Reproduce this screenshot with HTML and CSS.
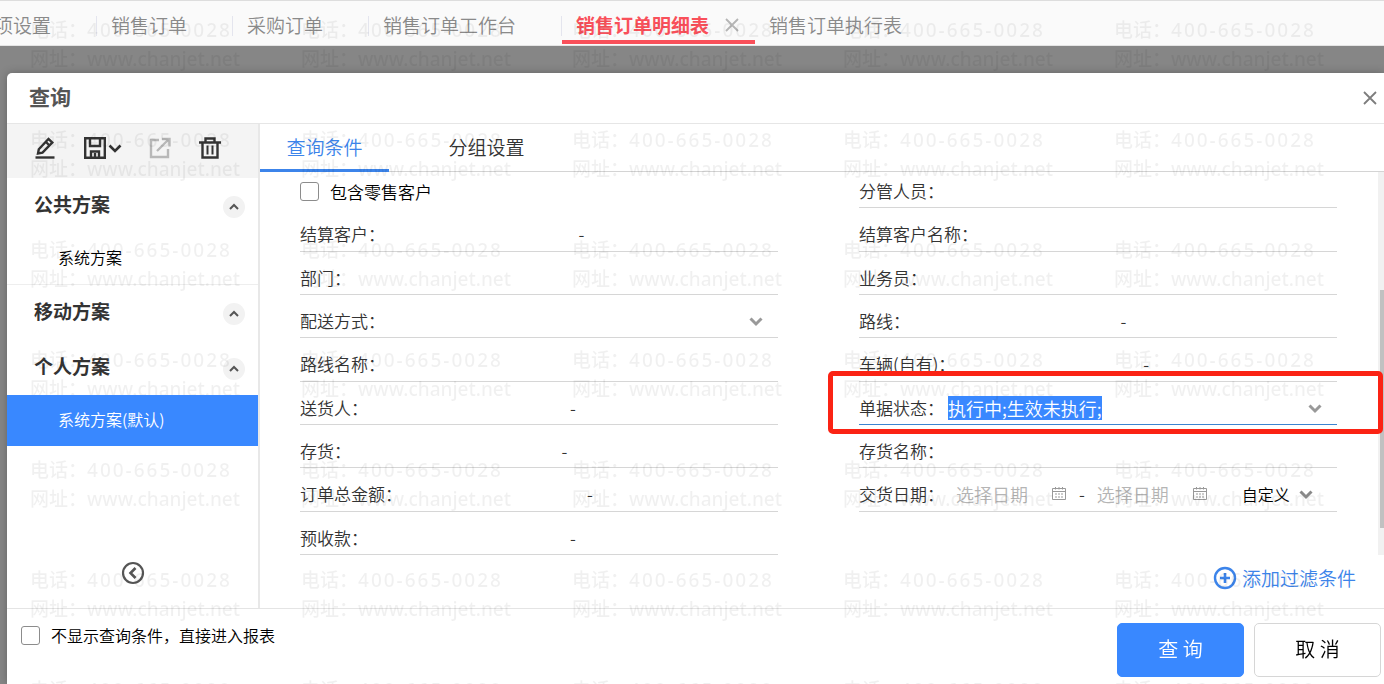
FILE: index.html
```html
<!DOCTYPE html>
<html lang="zh-CN">
<head>
<meta charset="utf-8">
<title>销售订单明细表</title>
<link rel="stylesheet" href="styles.css">
</head>
<body>
<svg class="sprite" aria-hidden="true">
  <symbol id="down" viewBox="0 0 14 14"><path d="M1.500 4.500L7 10l5.500-5.500" fill="none" stroke="currentColor" stroke-width="3"/></symbol>
  <symbol id="up" viewBox="0 0 14 14"><path d="M3 9l4-4 4 4" fill="none" stroke="currentColor" stroke-width="2"/></symbol>
  <symbol id="cross" viewBox="0 0 14 14"><path d="M1 1l12 12M13 1L1 13" fill="none" stroke="currentColor" stroke-width="1.8"/></symbol>
  <symbol id="calendar" viewBox="0 0 16 16"><path d="M1.500 2.500h13v11h-13zM1.500 5.500h13M4.500 1v2.500M8 1v2.500M11.500 1v2.500" fill="none" stroke="currentColor"/><path d="M4 8h2m1 0h2m1 0h2M4 11h2m1 0h2m1 0h2" stroke="currentColor"/></symbol>
</svg>

<nav class="pages">
  <a class="page" href="#">项设置</a>
  <a class="page" href="#">销售订单</a>
  <a class="page" href="#">采购订单</a>
  <a class="page" href="#">销售订单工作台</a>
  <span class="page page-active"><a href="#">销售订单明细表</a><button class="page-close" aria-label="关闭标签"><svg class="i14"><use href="#cross"/></svg></button></span>
  <a class="page" href="#">销售订单执行表</a>
</nav>

<div class="backdrop">
  <section class="dialog" role="dialog" aria-labelledby="dialog-title">
    <header class="dialog-head">
      <h1 id="dialog-title">查询</h1>
      <button class="dialog-close" aria-label="关闭"><svg class="i14"><use href="#cross"/></svg></button>
    </header>

    <div class="dialog-body">
      <aside class="side">
        <div class="tools">
          <button aria-label="编辑"><svg class="i22" viewBox="0 0 22 22" fill="none" stroke="currentColor"><path d="M1.500 20.500h19" stroke-width="2.400"/><path d="M4 16.500l.8-4.300L14.500 2l3.800 3.600-9.800 10zM12 5l3.500 3.500" stroke-width="2.400"/></svg></button>
          <button class="save" aria-label="保存"><svg class="i22" viewBox="0 0 22 22" fill="none" stroke="currentColor" stroke-width="2.4"><path d="M1.200 1.200h19.600v19.600H1.200zM6 1.500v7.500h10V1.500M7 20.500v-6h8v6M11 16v4"/></svg><svg class="i14" viewBox="0 0 14 14"><path d="M1.500 4.500L7 10l5.500-5.500" fill="none" stroke="currentColor" stroke-width="2.600"/></svg></button>
          <button class="muted" aria-label="分享"><svg class="i22" viewBox="0 0 22 22" fill="none" stroke="currentColor" stroke-width="2.400"><path d="M10 3H2v17h17v-8M8 14L20 2M13 2h7.500v7.500"/></svg></button>
          <button aria-label="删除"><svg class="i22" viewBox="0 0 22 22" fill="none" stroke="currentColor" stroke-width="2.400"><path d="M0 5.500h22M6.500 5V1.500h9V5M3.500 6v14.500h15V6"/><path d="M8.500 8.500v9M13.500 8.500v9" stroke-width="2"/></svg></button>
        </div>
        <div class="group"><h2>公共方案</h2><button class="fold" aria-label="收起公共方案"><svg class="i14"><use href="#up"/></svg></button></div>
        <a class="plan plan-last" href="#">系统方案</a>
        <div class="group"><h2>移动方案</h2><button class="fold" aria-label="收起移动方案"><svg class="i14"><use href="#up"/></svg></button></div>
        <div class="group"><h2>个人方案</h2><button class="fold" aria-label="收起个人方案"><svg class="i14"><use href="#up"/></svg></button></div>
        <a class="plan plan-active" href="#">系统方案(默认)</a>
        <button class="collapse" aria-label="收起侧栏"><svg class="i24" viewBox="0 0 24 24" fill="none" stroke="currentColor"><circle cx="12" cy="12" r="10" stroke-width="2.200"/><path d="M14.500 7l-5 5 5 5" stroke-width="2.600"/></svg></button>
      </aside>

      <main class="main">
        <div class="tabs" role="tablist">
          <button class="tab tab-active" role="tab" aria-selected="true">查询条件</button>
          <button class="tab" role="tab" aria-selected="false">分组设置</button>
        </div>
        <div class="scroll">
          <form class="fields">
            <label class="cell check"><input class="box" type="checkbox">包含零售客户</label>
            <div class="cell"><label for="f1">分管人员：</label><input id="f1"></div>
            <div class="cell"><label for="f2">结算客户：</label><input id="f2"><span>-</span><input aria-label="结算客户至"></div>
            <div class="cell"><label for="f3">结算客户名称：</label><input id="f3"></div>
            <div class="cell"><label for="f4">部门：</label><input id="f4"></div>
            <div class="cell"><label for="f5">业务员：</label><input id="f5"></div>
            <div class="cell"><label for="f6">配送方式：</label><input id="f6"><button class="drop" type="button" aria-label="选择配送方式"><svg class="i14"><use href="#down"/></svg></button></div>
            <div class="cell"><label for="f7">路线：</label><input id="f7"><span>-</span><input aria-label="路线至"></div>
            <div class="cell"><label for="f8">路线名称：</label><input id="f8"></div>
            <div class="cell"><label for="f9">车辆(自有)：</label><input id="f9"><span>-</span><input aria-label="车辆至"></div>
            <div class="cell"><label for="f10">送货人：</label><input id="f10"><span>-</span><input aria-label="送货人至"></div>
            <div class="cell cell-focus"><label for="status">单据状态：</label><input id="status" class="status" value="执行中;生效未执行;"><button class="drop" type="button" aria-label="选择单据状态"><svg class="i14"><use href="#down"/></svg></button><div class="callout"></div></div>
            <div class="cell"><label for="f12">存货：</label><input id="f12"><span>-</span><input aria-label="存货至"></div>
            <div class="cell"><label for="f13">存货名称：</label><input id="f13"></div>
            <div class="cell"><label for="f14">订单总金额：</label><input id="f14"><span>-</span><input aria-label="订单总金额至"></div>
            <div class="cell dates"><label for="f15">交货日期：</label><span class="date"><input id="f15" placeholder="选择日期"><svg class="i16"><use href="#calendar"/></svg></span><span>-</span><span class="date"><input aria-label="交货日期至" placeholder="选择日期"><svg class="i16"><use href="#calendar"/></svg></span><select class="range" aria-label="日期范围"><option>自定义</option></select><svg class="i14 range-arrow"><use href="#down"/></svg></div>
            <div class="cell"><label for="f16">预收款：</label><input id="f16"><span>-</span><input aria-label="预收款至"></div>
          </form>
          <div class="track"><div class="thumb"></div></div>
        </div>
        <div class="more"><button class="add"><svg class="i24" viewBox="0 0 24 24" fill="none" stroke="currentColor"><circle cx="12" cy="12" r="10" stroke-width="2.400"/><path d="M12 7v10M7 12h10" stroke-width="2.600"/></svg>添加过滤条件</button></div>
      </main>
    </div>

    <footer class="dialog-foot">
      <label class="skip"><input class="box" type="checkbox">不显示查询条件，直接进入报表</label>
      <div class="actions">
        <button class="btn btn-main">查 询</button>
        <button class="btn">取 消</button>
      </div>
    </footer>
  </section>
</div>

<div class="watermark" aria-hidden="true"></div>
<script src="app.js"></script>
</body>
</html>
```

FILE: styles.css
```css
* { box-sizing: border-box; }

body {
  margin: 0;
  height: 100vh;
  overflow: hidden;
  display: flex;
  flex-direction: column;
  font-family: "Noto Sans CJK SC", sans-serif;
  font-weight: 350;
  font-size: 17px;
  line-height: 24px;
  color: #333;
}

button, input, select { font: inherit; color: inherit; }
button { border: 0; padding: 0; background: none; display: flex; align-items: center; justify-content: center; }
a { color: inherit; text-decoration: none; }
h1, h2 { margin: 0; }
svg { display: block; flex: none; }

.sprite { position: absolute; width: 0; height: 0; }
.i14 { width: 14px; height: 14px; }
.i16 { width: 16px; height: 16px; }
.i22 { width: 22px; height: 22px; }
.i24 { width: 24px; height: 24px; }

.pages {
  flex: none;
  display: flex;
  height: 46px;
  padding: 12px 0 0;
  margin-left: -20px;
  background: #fafafa;
  border-top: 1px solid #ddd;
  border-bottom: 1px solid #e4e4e4;
  font-size: 19px;
  color: #8a8a8a;
}
.page {
  flex: none;
  padding: 0 46px 0 14px;
  white-space: nowrap;
  background: linear-gradient(#e4e5ee, #e4e5ee) right 0 top 3px / 1px 20px no-repeat;
}
.page:last-child { background: none; }
.page-active {
  display: flex;
  align-items: center;
  align-self: stretch;
  gap: 16px;
  padding: 0 16px 3px 14px;
  margin-bottom: 1px;
  border-bottom: 4px solid #f9505a;
  background: none;
  color: #f9505a;
  font-weight: 700;
}
.page-close { color: #b5b5b5; }

.backdrop {
  flex: 1;
  min-height: 0;
  padding: 27px 0 0 7px;
  background: #868686;
}
.dialog {
  height: 100%;
  display: flex;
  flex-direction: column;
  background: #fff;
  border-radius: 5px 0 0 0;
  box-shadow: 0 0 8px rgba(0, 0, 0, .25);
}
.dialog-head {
  display: flex;
  justify-content: space-between;
  align-items: center;
  height: 51px;
  padding: 0 7px 0 22px;
  border-bottom: 1px solid #e6e6e6;
}
.dialog-head h1 { padding-bottom: 4px; font-size: 21px; color: #555; }
.dialog-close { color: #7d7d7d; }

.dialog-body { flex: 1; min-height: 0; display: flex; }

.side {
  flex: none;
  width: 253px;
  display: flex;
  flex-direction: column;
  border-right: 2px solid #e8e8e8;
}
.tools {
  display: flex;
  align-items: center;
  justify-content: space-between;
  height: 54px;
  padding: 0 37px 6px 27px;
  background: #f4f4f4;
}
.tools .muted { color: #b8b8b8; }
.save { gap: 2px; }
.group {
  display: flex;
  align-items: center;
  justify-content: space-between;
  height: 55px;
  padding: 0 13px 0 27px;
}
.group h2 { padding-bottom: 3px; font-size: 19px; }
.fold { width: 22px; height: 22px; margin-top: 2px; border-radius: 50%; background: #f2f2f2; color: #555; }
.plan {
  display: flex;
  align-items: center;
  height: 51px;
  padding: 0 0 3px 51px;
  font-size: 16px;
  color: #000;
}
.plan-last { height: 52px; border-bottom: 1px solid #eee; }
.plan-active { position: relative; z-index: 6; background: #3988ff; color: #fff; }
.collapse { margin: auto auto 23px; color: #555; }

.main { flex: 1; min-width: 0; display: flex; flex-direction: column; overflow: hidden; }
.tabs { display: flex; gap: 33px; height: 48px; border-bottom: 1px solid #d4d4d4; }
.tab { width: 129px; height: 48px; padding: 1px 0 0; border-bottom: 3px solid transparent; font-size: 19px; }
.tab-active { border-color: #3c84ea; color: #3c84ea; }

.scroll { flex: 1; min-height: 0; display: flex; justify-content: space-between; }
.fields {
  flex: 1;
  display: grid;
  grid-template-columns: 1fr 1fr;
  grid-auto-rows: 1fr;
  column-gap: 81px;
  margin-top: -7px;
  padding: 0 41px 0 40px;
}
.cell {
  position: relative;
  display: flex;
  align-items: center;
  min-width: 0;
  padding-top: 10px;
  border-bottom: 1px solid #d6d6d6;
}
.cell label { flex: none; }
.cell input:not(.box) {
  flex: 1;
  min-width: 0;
  width: 0;
  padding: 0;
  border: 0;
  outline: 0;
  background: none;
}
.check { border: 0; gap: 11px; color: #000; }
.box {
  appearance: none;
  flex: none;
  width: 19px;
  height: 19px;
  margin: 0;
  border: 1px solid #8c8c8c;
  border-radius: 3px;
  background: #fff;
}
.drop { margin-right: 15px; color: #999; }
.cell-focus { border-color: #3c84d0; }
.cell .status { font-size: 18px; margin-left: 4px; }
.status::selection { background: #3988ff; color: #fff; }
.callout {
  position: absolute;
  z-index: 7;
  inset: -11px -46px -10px -31px;
  border: 5px solid #fb2314;
  border-radius: 5px;
  pointer-events: none;
}
.dates { gap: 12px; }
.date { display: flex; align-items: center; width: 111px; font-size: 18px; }
.date svg { color: #999; }
.date input::placeholder { color: #b5b5b5; }
.range {
  appearance: none;
  margin-left: 22px;
  width: 48px;
  padding: 0;
  border: 0;
  background: none;
  font-size: 16px;
  color: #000;
}
.range-arrow { margin-left: -3px; color: #888; }

.track { flex: none; width: 6px; padding: 118px 0 27px 2px; background: #f1f1f1; display: flex; }
.thumb { flex: 1; background: #c1c1c1; }

.more { display: flex; justify-content: flex-end; height: 53px; padding: 0 28px 8px 0; }
.add { gap: 5px; font-size: 19px; color: #3c84ea; }

.dialog-foot {
  display: flex;
  justify-content: space-between;
  align-items: flex-start;
  height: 76px;
  padding: 14px 3px 0 14px;
  border-top: 1px solid #e4e4e4;
}
.skip { display: flex; align-items: center; gap: 11px; font-size: 16px; color: #000; }
.actions { display: flex; gap: 10px; position: relative; z-index: 6; }
.btn {
  width: 127px;
  height: 54px;
  padding-bottom: 2px;
  border: 1px solid #d6d6d6;
  border-radius: 5px;
  background: #fff;
  font-size: 20px;
  color: #000;
}
.btn-main { border-color: #3988ff; background: #3988ff; color: #fff; }

.watermark {
  position: fixed;
  inset: 0;
  z-index: 5;
  overflow: hidden;
  pointer-events: none;
  display: grid;
  grid-template-columns: repeat(5, 271px);
  grid-auto-rows: 110px;
  padding: 16px 0 0 30px;
  font-family: "Noto Sans", "Noto Sans CJK SC", sans-serif;
  font-size: 19px;
  font-weight: 500;
  line-height: 29px;
  color: rgba(0, 0, 0, .06);
  white-space: nowrap;
}
.watermark p { margin: 0; }
.phone { letter-spacing: 2px; }
```

FILE: app.js
```js
const mark = document.querySelector('.watermark');
const stamp = '<p>电话：<span class="phone">400-665-0028</span><br>网址：www.chanjet.net</p>';
mark.innerHTML = stamp.repeat(35);

const status = document.getElementById('status');
status.focus();
status.select();
```
